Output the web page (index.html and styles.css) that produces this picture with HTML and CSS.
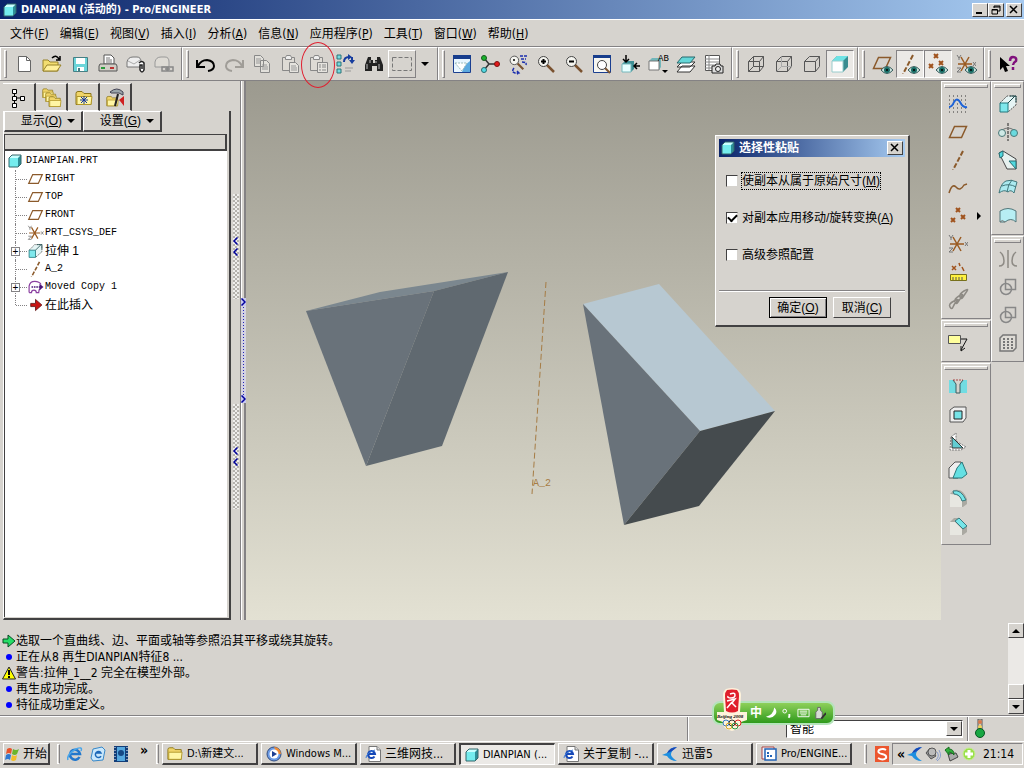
FILE: index.html
```html
<!DOCTYPE html>
<html lang="zh-CN">

<head>
    <meta charset="UTF-8">
    <meta name="viewport" content="width=device-width, initial-scale=1.0">
    <title>DIANPIAN (活动的) - Pro/ENGINEER</title>
    <link rel="stylesheet" href="styles.css">
</head>

<body>
    <!-- Shared icons -->
    <svg class="sprite" aria-hidden="true">
        <symbol id="part" viewBox="0 0 14 14">
            <path d="M1 4l3-3h9v9l-3 3H1z" fill="#2e8f98" />
            <path d="M1 4l3-3h9l-3 3z" fill="#c9ffff" />
            <path d="M1 4h9v9H1z" fill="#74ecee" />
            <path d="M1 4l3-3h9v9l-3 3H1z" fill="none" stroke="#33666b" />
        </symbol>
        <symbol id="plane" viewBox="0 0 20 20">
            <path d="M6.500 4.500H18.500L13.500 15.500H1.500z" fill="none" stroke="#8b5a2b" stroke-width="1.500" />
        </symbol>
        <symbol id="axis" viewBox="0 0 20 20">
            <path d="M15 1L5 20" stroke="#8b5a2b" stroke-width="2" stroke-dasharray="5 2" />
        </symbol>
        <symbol id="points" viewBox="0 0 20 20">
            <path d="M8 2l4 4m0-4l-4 4M13 9l4 4m0-4l-4 4M3 12l4 4m0-4l-4 4" stroke="#a0521d" stroke-width="2" />
        </symbol>
        <symbol id="csys" viewBox="0 0 20 20">
            <path d="M2 10h14M5 3l8 14M13 3L5 17" stroke="#9a5a20" stroke-width="1.500" />
            <path d="M1 1l2 3 2-3M3 4v2M17 8l3 4m0-4l-3 4M1 14h4l-4 4h4" fill="none" stroke="#777" />
        </symbol>
        <symbol id="eye" viewBox="0 0 12 8">
            <path d="M0 4q6-7 12 0q-6 7-12 0z" fill="#cfe4e0" stroke="#355b5b" />
            <circle cx="6" cy="4" r="3" fill="#176b64" />
            <circle cx="6" cy="4" r="1" />
        </symbol>
        <symbol id="extrude" viewBox="0 0 20 20">
            <path d="M2 9l7-7h9v9l-8 7" fill="#e6f5f5" stroke="#555" stroke-dasharray="2 1" />
            <path d="M2 9h8v9H2z" fill="#7fe8ec" stroke="#22777d" />
            <path d="M10 9l7-7M12 2h6v6" fill="none" stroke="#224f50" />
        </symbol>
        <symbol id="folder" viewBox="0 0 18 16">
            <path d="M1 3q0-2 2-2h4l2 2h7v11H1z" fill="#f0d468" stroke="#8a7418" />
            <path d="M2 6h15l-1 8H2z" fill="#fff6a4" stroke="#b09628" />
        </symbol>
        <symbol id="ie" viewBox="0 0 16 16">
            <path d="M12.500 11a5 5 0 1 1 .5-3H4" fill="none" stroke="#2277cc" stroke-width="2.500" />
            <path d="M1 14Q-1 9 9 3q7-3 5 2" fill="none" stroke="#4aa5e8" stroke-width="1.500" />
        </symbol>
        <symbol id="iepage" viewBox="0 0 16 16">
            <path d="M4 .5h8l3.500 3.500v11.500H4z" fill="#fff" stroke="#777" />
            <path d="M12 .5v3.500h3.500" fill="#ddd" stroke="#777" />
            <path d="M9.500 10.500a3.500 3.500 0 1 1 .5-2.500H3" fill="none" stroke="#1648b8" stroke-width="2" />
            <path d="M1 12Q1 7 10 4" fill="none" stroke="#3b7cd8" />
        </symbol>
        <symbol id="bird" viewBox="0 0 16 16">
            <path d="M15 1Q8 1 5 7L0 9l5 1q3 5 10 5q-5-3-6-6q0-5 6-8z" fill="#1d8fe0" />
            <path d="M15 1Q8 1 5 7q5-1 10-6z" fill="#1a49b8" />
        </symbol>
        <symbol id="box" viewBox="0 0 20 20">
            <path d="M2.500 7.500h11v10h-11zM2.500 7.500l5-5h10l-4 5M17.500 2.500v10l-4 5" fill="none" stroke="#555" />
        </symbol>
        <symbol id="clipboard" viewBox="0 0 20 20">
            <path d="M2.500 3.500h12v13h-12z" fill="#dedbd5" stroke="#888" />
            <path d="M5.500 3.500l1-2h4l1 2v2h-6z" fill="#eee" stroke="#888" />
        </symbol>
        <symbol id="union" viewBox="0 0 20 20">
            <path d="M7.500 2.500h10v10h-10z" fill="none" stroke="#888" stroke-width="1.500" />
            <circle cx="8" cy="12" r="5.500" fill="none" stroke="#888" stroke-width="1.500" />
        </symbol>
        <symbol id="magnifier" viewBox="0 0 20 20">
            <path d="M11 11l7 7" stroke="#7a5230" stroke-width="2.500" />
            <circle cx="7.500" cy="7.500" r="5" fill="#f5f5f0" stroke="#444" />
        </symbol>
        <symbol id="chevron" viewBox="0 0 5 8">
            <path d="M4.500 .5L1 4l3.500 3.500" fill="none" stroke="#00009c" stroke-width="1.500" />
        </symbol>
    </svg>

    <header class="titlebar">
        <svg class="icon-sm"><use href="#part" /></svg>
        <h1>DIANPIAN (活动的) - Pro/ENGINEER</h1>
        <div class="window-buttons">
            <button class="win-btn" aria-label="最小化"><svg viewBox="0 0 10 10"><path d="M1 8h6" stroke="#000" stroke-width="2" /></svg></button>
            <button class="win-btn" aria-label="还原"><svg viewBox="0 0 10 10"><path d="M3 1h6v5H7M3 3V1M3 2h6M1 4.500h5.500V9H1zM1 5h5" fill="none" stroke="#000" /></svg></button>
            <button class="win-btn win-close" aria-label="关闭"><svg viewBox="0 0 10 10"><path d="M1 1l7 7M8 1L1 8" stroke="#000" stroke-width="1.500" /></svg></button>
        </div>
    </header>

    <nav class="menubar">
        <button>文件(<u>F</u>)</button>
        <button>编辑(<u>E</u>)</button>
        <button>视图(<u>V</u>)</button>
        <button>插入(<u>I</u>)</button>
        <button>分析(<u>A</u>)</button>
        <button>信息(<u>N</u>)</button>
        <button>应用程序(<u>P</u>)</button>
        <button>工具(<u>T</u>)</button>
        <button>窗口(<u>W</u>)</button>
        <button>帮助(<u>H</u>)</button>
    </nav>

    <div class="toolbar">
        <div class="tool-group">
            <button class="tool" aria-label="新建"><svg viewBox="0 0 20 20"><path d="M4.500 2.500h8l4 4v11h-12z" fill="#fff" stroke="#666" /><path d="M12.500 2.500v4h4" fill="none" stroke="#666" /></svg></button>
            <button class="tool" aria-label="打开"><svg viewBox="0 0 20 20"><path d="M1 6h5l2 2h8v9H1z" fill="#f2dd70" stroke="#98832a" /><path d="M1 17l4-6h14l-4 6z" fill="#fff09a" stroke="#98832a" /><path d="M10 4q4-4 7 1m-3 1h4V2" fill="none" stroke="#000" stroke-width="1.500" /></svg></button>
            <button class="tool" aria-label="保存"><svg viewBox="0 0 20 20"><path d="M3.500 3.500h14v14h-14z" fill="#6bd5d9" stroke="#467f84" /><path d="M6 4h9v6H6zM7 13h7v4H7z" fill="#fff" /><path d="M8 14h2v3H8z" fill="#467f84" /></svg></button>
            <button class="tool" aria-label="打印"><svg viewBox="0 0 20 20"><path d="M6 10V1h7l3 3v6z" fill="#fff" stroke="#555" /><path d="M8 4h4M8 6h6M8 8h6" stroke="#777" /><path d="M2 10h16l1 2v5H1v-5z" fill="#d0cec6" stroke="#555" /><path d="M3 14h4" stroke="#2a9a3c" stroke-width="2" /><path d="M12 14h4" stroke="#b33" stroke-width="2" /></svg></button>
            <button class="tool" aria-label="附加发送"><svg viewBox="0 0 20 20"><path d="M1 8q1-5 6-5h4q4 0 4 5v5H1z" fill="#eee" stroke="#777" /><path d="M2 7l6 3 6-4" fill="none" stroke="#aaa" /><path d="M13 9q3-3 5 0v7q-2 4-4 0v-5h2v4" fill="#fff" stroke="#222" stroke-width="1.500" /></svg></button>
            <button class="tool" aria-label="链接发送"><svg viewBox="0 0 20 20"><path d="M1 8q1-5 6-5h4q4 0 4 5v5H1z" fill="#dedbd5" stroke="#999" /><path d="M8 13h5v4H8zM14 13h5v4h-5zM11 15h5" fill="none" stroke="#888" stroke-width="1.500" /></svg></button>
        </div>
        <div class="tool-group">
            <button class="tool" aria-label="撤消"><svg viewBox="0 0 20 20"><path d="M1 6v7h8M2 12q3-6 9-6 7 1 7 6 0 4-6 5" fill="none" stroke="#000" stroke-width="2" /></svg></button>
            <button class="tool" aria-label="重做"><svg viewBox="0 0 20 20"><path d="M19 6v7h-8M18 12q-3-6-9-6-7 1-7 6 0 4 6 5" fill="none" stroke="#a09d98" stroke-width="2" /></svg></button>
            <button class="tool" aria-label="复制"><svg viewBox="0 0 20 20"><path d="M2.500 1.500h6l3 3v8h-9zM8.500 6.500h6l3 3v9h-9z" fill="#e2e0db" stroke="#888" /><path d="M4 5h5M4 7h4M4 9h4M10 11h5M10 13h6M10 15h6" stroke="#999" /></svg></button>
            <button class="tool" aria-label="粘贴"><svg viewBox="0 0 20 20"><use href="#clipboard" /><path d="M9.500 8.500h6l3 3v7h-9z" fill="#e6e4df" stroke="#888" /><path d="M11 12h5M11 14h6M11 16h6" stroke="#999" /></svg></button>
            <button class="tool tool-marked" aria-label="选择性粘贴"><svg viewBox="0 0 20 20"><use href="#clipboard" /><path d="M9.500 8.500h10v10h-10z" fill="#e6e4df" stroke="#888" /><path d="M11 11h2M14 11h4M11 13h2M14 13h4M11 16h2M14 16h4" stroke="#888" /></svg></button>
            <button class="tool" aria-label="再生"><svg viewBox="0 0 20 20"><path d="M1 1h4v4H1zM1 8h4v4H1zM1 15h4v4H1z" fill="#76d9df" stroke="#2d7478" /><path d="M8 8q0-5 5-5" fill="none" stroke="#173d9e" stroke-width="2" /><path d="M12 0l4 3-4 3zM16 10l3-4h-6z" fill="#173d9e" /><path d="M16 3v4" stroke="#173d9e" stroke-width="2" /><path d="M9 14h8M9 17h6" stroke="#999" /></svg></button>
            <button class="tool" aria-label="查找"><svg viewBox="0 0 20 20"><path d="M4 3h3v3h2v3h2V6h2V3h3l3 8v6h-6v-5H8v5H1v-6z" fill="#222" /><path d="M3 10v5M6 6v3M15 10v5M12 7v2" stroke="#bbb" /></svg></button>
            <button class="tool raised" aria-label="选取框"><svg viewBox="0 0 20 20"><path d="M.5 3.500h19v13H.5z" fill="none" stroke="#777" stroke-dasharray="4 2" /></svg></button>
            <button class="tool tool-arrow" aria-label="选取选项"><svg viewBox="0 0 8 6"><path d="M0 1h8L4 5z" /></svg></button>
        </div>
        <div class="tool-group">
            <button class="tool" aria-label="重画"><svg viewBox="0 0 20 20"><path d="M1.500 1.500h17v17h-17z" fill="#e8f6ff" stroke="#1b3f90" /><path d="M1 1h18v4H1z" fill="#173d8c" /><path d="M10 18q2-7 8-11v11z" fill="#5ba9df" /><path d="M3 9l7 8 5-8z" fill="#fff" stroke="#9bb" stroke-dasharray="2 1" /></svg></button>
            <button class="tool" aria-label="旋转中心"><svg viewBox="0 0 20 20"><path d="M4 4l5 6-5 6M9 10h8" fill="none" stroke="#333" stroke-width="1.500" /><circle cx="4" cy="4" r="2.500" fill="#19b32c" stroke="#15591d" /><circle cx="4" cy="16" r="2.500" fill="#55dbe5" stroke="#286c70" /><circle cx="17" cy="10" r="2.500" fill="#e31919" stroke="#791414" /></svg></button>
            <button class="tool" aria-label="定向模式"><svg viewBox="0 0 20 20"><use href="#magnifier" width="17" height="17" /><circle cx="6" cy="6" r="1" /><path d="M12 2h7M13 5h5M14 8q5 0 4 3M6 14q-3 4 1 5h4m-2-2l2 2-2 1" fill="none" stroke="#1b2fae" stroke-width="1.500" stroke-dasharray="3 1" /></svg></button>
            <button class="tool" aria-label="放大"><svg viewBox="0 0 20 20"><use href="#magnifier" /><path d="M5 7.500h5M7.500 5v5" stroke="#000" stroke-width="2" /></svg></button>
            <button class="tool" aria-label="缩小"><svg viewBox="0 0 20 20"><use href="#magnifier" /><path d="M5 7.500h5" stroke="#000" stroke-width="2" /></svg></button>
            <button class="tool" aria-label="重新调整"><svg viewBox="0 0 20 20"><path d="M1.500 1.500h17v17h-17z" fill="#f6f6f1" stroke="#1b3f90" /><path d="M1 1h18v3H1z" fill="#173d8c" /><path d="M13 14l5 5" stroke="#7a5230" stroke-width="2" /><circle cx="10" cy="11" r="4.500" fill="#fff" stroke="#444" /></svg></button>
            <button class="tool" aria-label="重定向"><svg viewBox="0 0 20 20"><path d="M2 10l3-3h9v8l-3 3H2z" fill="#3e8f94" /><path d="M2 10h9v8H2z" fill="#e8ffff" stroke="#77b8bc" /><path d="M6 1v7m-3-3l3 3 3-3M20 12h-6m3-3l-3 3 3 3" fill="none" stroke="#000" stroke-width="1.500" /></svg></button>
            <button class="tool" aria-label="已命名的视图列表"><svg viewBox="0 0 20 20"><path d="M1 7l3-3h9v9l-2 3H1z" fill="#72b6ba" /><path d="M1 7h10v9H1z" fill="#fff" stroke="#777" /><text x="10" y="7" class="icon-text">AB</text><path d="M14 16h6l-3 3z" /></svg></button>
            <button class="tool" aria-label="层"><svg viewBox="0 0 20 20"><path d="M6 12h13l-5 6H1zM6 8h13l-5 5H1z" fill="#fff" stroke="#333" /><path d="M6 3h13l-5 6H1z" fill="#64d7d8" stroke="#28686c" /></svg></button>
            <button class="tool" aria-label="视图管理器"><svg viewBox="0 0 20 20"><path d="M1.500 1.500h14v15h-14z" fill="#fff" stroke="#555" /><path d="M1 5h14M1 8h14M1 11h14M1 14h14M5 1v15" stroke="#888" /><path d="M8 12h3l1-2h4l1 2h2v7H8z" fill="#ddd" stroke="#222" /><circle cx="14" cy="15" r="2.500" fill="#eee" stroke="#222" /></svg></button>
        </div>
        <div class="tool-group">
            <button class="tool" aria-label="线框"><svg viewBox="0 0 20 20"><use href="#box" /><path d="M7.500 2.500v10h10M7.500 12.500l-5 5" fill="none" stroke="#555" /></svg></button>
            <button class="tool" aria-label="隐藏线"><svg viewBox="0 0 20 20"><use href="#box" /><path d="M7.500 2.500v10h10M7.500 12.500l-5 5" fill="none" stroke="#aaa" /></svg></button>
            <button class="tool" aria-label="消隐"><svg><use href="#box" /></svg></button>
            <button class="tool pressed" aria-label="着色"><svg viewBox="0 0 20 20"><path d="M2 7l5-5h11v11l-5 5H2z" fill="#3a8c90" /><path d="M2 7l5-5h11l-5 5z" fill="#6fe3e5" /><path d="M2 7h11v11H2z" fill="#fff" stroke="#9cc" /></svg></button>
        </div>
        <div class="tool-group">
            <button class="tool" aria-label="平面显示"><svg viewBox="0 0 20 20"><use href="#plane" y="-1" width="20" height="20" /><use href="#eye" x="9" y="12" width="12" height="8" /></svg></button>
            <button class="tool pressed" aria-label="轴显示"><svg viewBox="0 0 20 20"><use href="#axis" x="-2" width="20" height="20" /><use href="#eye" x="8" y="12" width="12" height="8" /></svg></button>
            <button class="tool pressed" aria-label="点显示"><svg viewBox="0 0 20 20"><use href="#points" x="-2" y="-2" width="20" height="20" /><use href="#eye" x="8" y="12" width="12" height="8" /></svg></button>
            <button class="tool" aria-label="坐标系显示"><svg viewBox="0 0 20 20"><use href="#csys" width="20" height="20" /><use href="#eye" x="9" y="12" width="12" height="8" /></svg></button>
        </div>
        <div class="tool-group">
            <button class="tool" aria-label="上下文帮助"><svg viewBox="0 0 20 20"><path d="M2 3v13l3-3 2 5 3-1-2-5h4z" /><path d="M12 7q0-4 3-4 4 0 3 4-3 2-3 4M15 13v3" fill="none" stroke="#80107c" stroke-width="2.500" /></svg></button>
        </div>
    </div>

    <main class="workspace">
        <!-- Model tree -->
        <aside class="navigator">
            <div class="nav-tabs">
                <button class="nav-tab active" aria-label="模型树"><svg viewBox="0 0 20 20"><path d="M4.500 1v18M4 10h9" stroke="#000" /><path d="M2.500 1.500h4v4h-4zM2.500 8.500h4v4h-4zM2.500 15.500h4v4h-4zM10.500 8.500h4v4h-4z" fill="#fff" stroke="#000" /></svg></button>
                <button class="nav-tab" aria-label="文件夹浏览器"><svg viewBox="0 0 20 20"><use href="#folder" width="12" height="11" /><use href="#folder" x="3" y="4" width="12" height="11" /><use href="#folder" x="6" y="8" width="14" height="12" /></svg></button>
                <button class="nav-tab" aria-label="收藏夹"><svg viewBox="0 0 20 20"><use href="#folder" x="1" y="2" width="18" height="17" /><path d="M10 8v8M6 12h8M7 9l6 6M13 9l-6 6" stroke="#14359e" /></svg></button>
                <button class="nav-tab" aria-label="连接"><svg viewBox="0 0 20 20"><use href="#folder" y="7" width="13" height="13" /><path d="M4 4q7-6 13 0v3l-4-2H5z" fill="#9aa5aa" stroke="#445" /><path d="M12 6l-3 12" stroke="#222" stroke-width="2" /><path d="M13 12l5-4v10l-4-5z" fill="#cf2020" /></svg></button>
            </div>
            <div class="nav-body">
                <div class="nav-menus">
                    <button>显示(<u>O</u>) <span class="down"></span></button>
                    <button>设置(<u>G</u>) <span class="down"></span></button>
                </div>
                <div class="tree-panel">
                    <div class="tree-header"></div>
                    <div class="tree-root"><svg class="icon-sm"><use href="#part" /></svg>DIANPIAN.PRT</div>
                    <ul class="tree">
                        <li><svg class="icon-tree"><use href="#plane" /></svg>RIGHT</li>
                        <li><svg class="icon-tree"><use href="#plane" /></svg>TOP</li>
                        <li><svg class="icon-tree"><use href="#plane" /></svg>FRONT</li>
                        <li><svg class="icon-tree"><use href="#csys" /></svg>PRT_CSYS_DEF</li>
                        <li class="expandable cjk"><svg class="icon-tree"><use href="#extrude" /></svg>拉伸 1</li>
                        <li><svg class="icon-tree"><use href="#axis" /></svg>A_2</li>
                        <li class="expandable"><svg class="icon-tree" viewBox="0 0 20 20"><path d="M2 17V9q1-6 7-6 6 0 8 4M2 17h3q0-3 3-3t3 3h3q0-4 2-5" fill="none" stroke="#8a3fa0" stroke-width="1.500" /><path d="M5 10h11" stroke="#4b1479" stroke-width="2" stroke-dasharray="2 1" /><path d="M15 6l5 4-5 4z" fill="#4b1479" /></svg>Moved Copy 1</li>
                        <li class="cjk"><svg class="icon-tree" viewBox="0 0 20 20"><path d="M4 8h6V3l8 7-8 7v-5H4z" fill="#c81414" stroke="#5b1010" /></svg>在此插入</li>
                    </ul>
                </div>
            </div>
        </aside>
        <div class="sash">
            <div class="sash-handle"><svg><use href="#chevron" /></svg><svg><use href="#chevron" /></svg></div>
            <div class="sash-handle"><svg><use href="#chevron" /></svg><svg><use href="#chevron" /></svg></div>
        </div>
        <div class="splitter">
            <div class="splitter-handle"><svg><use href="#chevron" /></svg><svg><use href="#chevron" /></svg></div>
        </div>

        <section class="viewport">
            <svg class="model" viewBox="0 0 695 539" preserveAspectRatio="none">
                <path d="M60 230L134 211 262 191 188 210z" fill="#7b878f" />
                <path d="M60 230L188 210 120 385z" fill="#69727a" />
                <path d="M188 210L262 191 196 365 120 385z" fill="#606970" />
                <path d="M337 223L413 203 529 330 454 350z" fill="#b7c8d2" />
                <path d="M337 223L454 350 378 444z" fill="#69727a" />
                <path d="M454 350L529 330 453 425 378 444z" fill="#454b4e" />
                <path d="M300 201L286 413" stroke="#a67c45" stroke-dasharray="6 3" />
                <text x="287" y="405">A_2</text>
            </svg>

            <form class="dialog">
                <div class="dialog-title">
                    <svg class="icon-sm"><use href="#part" /></svg>
                    <h2>选择性粘贴</h2>
                    <button type="button" class="win-btn" aria-label="关闭对话框"><svg viewBox="0 0 10 10"><path d="M1 1l7 7M8 1L1 8" stroke="#000" stroke-width="1.500" /></svg></button>
                </div>
                <div class="dialog-body">
                    <label><input type="checkbox"><span class="focused">使副本从属于原始尺寸(<u>M</u>)</span></label>
                    <label><input type="checkbox" checked><span>对副本应用移动/旋转变换(<u>A</u>)</span></label>
                    <label><input type="checkbox"><span>高级参照配置</span></label>
                </div>
                <div class="dialog-actions">
                    <button type="button" class="default">确定(<u>O</u>)</button>
                    <button type="button">取消(<u>C</u>)</button>
                </div>
            </form>
        </section>

        <!-- Feature toolbars -->
        <div class="side-column side-wide">
            <div class="side-group">
                <button class="tool" aria-label="草绘"><svg viewBox="0 0 20 20"><path d="M1 2h18M1 6h18M1 10h18M1 14h18M1 18h18" stroke="#333" stroke-dasharray="1 3" /><path d="M1 13q3 0 5-5 3-5 6 0 3 6 7 5" fill="none" stroke="#1d63d8" stroke-width="2" /></svg></button>
                <button class="tool" aria-label="平面"><svg><use href="#plane" /></svg></button>
                <button class="tool" aria-label="轴"><svg><use href="#axis" /></svg></button>
                <button class="tool" aria-label="曲线"><svg viewBox="0 0 20 20"><path d="M1 15q3-10 7-6 4 5 8-2l3-1" fill="none" stroke="#8b5a2b" stroke-width="1.500" /></svg></button>
                <button class="tool" aria-label="点"><svg><use href="#points" /></svg><span class="flyout"></span></button>
                <button class="tool" aria-label="坐标系"><svg><use href="#csys" /></svg></button>
                <button class="tool" aria-label="分析"><svg viewBox="0 0 20 20"><path d="M4 4l4 4m0-4L4 8M11 1l1 3M14 5l2 4" stroke="#a0521d" stroke-width="1.500" /><path d="M2.500 12.500h16v6h-16z" fill="#fff23f" stroke="#77701c" /><path d="M5 18v-3M8 18v-3M11 18v-3M14 18v-3" stroke="#555" /></svg></button>
                <button class="tool" aria-label="参照"><svg viewBox="0 0 20 20"><path d="M2 17q-2-3 4-6t3 0-4 6-3 0zM7 12q-1-3 4-6t3 0-4 6-3 0zM12 7q-1-3 4-6t3 0-4 6-3 0z" fill="none" stroke="#8d8a84" stroke-width="1.500" /></svg></button>
            </div>
            <div class="side-group">
                <button class="tool" aria-label="注释"><svg viewBox="0 0 20 20"><path d="M.5 2.500h12v8H.5z" fill="#ffff9c" stroke="#555" /><path d="M13 6h6l-6 11m0-4v5l4-3" fill="none" stroke="#111" /></svg></button>
            </div>
            <div class="side-group">
                <button class="tool" aria-label="孔"><svg viewBox="0 0 20 20"><path d="M1 4h4l3 4v9H1zM19 4h-4l-3 4v9h7z" fill="#72dce2" /><path d="M5 4l3 4v9h4V8l3-4" fill="none" stroke="#375d60" /><path d="M5 4h10" stroke="#a44" stroke-dasharray="2 1" /></svg></button>
                <button class="tool" aria-label="壳"><svg viewBox="0 0 20 20"><path d="M2 6l4-3h12v11l-3 4H2z" fill="#eee" stroke="#555" /><path d="M6 7h8v8H6z" fill="#76e3e7" stroke="#222" /></svg></button>
                <button class="tool" aria-label="筋"><svg viewBox="0 0 20 20"><path d="M3 5l5-4v8l10 6-5 3H2z" fill="#fff" stroke="#777" stroke-dasharray="2 1" /><path d="M4 5v11h11z" fill="#62cdd2" stroke="#333" /></svg></button>
                <button class="tool" aria-label="拔模"><svg viewBox="0 0 20 20"><path d="M1 8l6-6h6v5l-3 11H1z" fill="#eee" stroke="#555" /><path d="M9 8l5-6 5 12-5 4H5z" fill="#65e0e3" stroke="#28777a" /></svg></button>
                <button class="tool" aria-label="倒圆角"><svg viewBox="0 0 20 20"><path d="M2 6l4-4q9-2 13 9v5l-4 3H2z" fill="#aaa9a2" /><path d="M2 6q10 0 12 7v6H2z" fill="#e7e7e1" /><path d="M5 3q8-2 13 9l-4 1Q12 6 6 6z" fill="#75e5e8" stroke="#397b80" /></svg></button>
                <button class="tool" aria-label="倒角"><svg viewBox="0 0 20 20"><path d="M2 6l4-4h5l8 8v6l-4 3H2z" fill="#aaa9a2" /><path d="M2 6h5l7 7v6H2z" fill="#e7e7e1" /><path d="M7 5l4-3 8 8-4 3z" fill="#75e5e8" stroke="#397b80" /></svg></button>
            </div>
        </div>
        <div class="side-column side-narrow">
            <div class="side-group">
                <button class="tool" aria-label="拉伸"><svg><use href="#extrude" /></svg></button>
                <button class="tool" aria-label="旋转"><svg viewBox="0 0 20 20"><path d="M10 1v18" stroke="#222" stroke-dasharray="3 1" /><path d="M4 8q6-4 12 0" fill="none" stroke="#777" /><circle cx="4" cy="11" r="3.500" fill="#cfe9e6" stroke="#4b7777" /><circle cx="16" cy="11" r="3.500" fill="#6adade" stroke="#4b7777" /></svg></button>
                <button class="tool" aria-label="可变剖面扫描"><svg viewBox="0 0 20 20"><path d="M1 3l4-2 13 8v10h-9z" fill="#e7f1ef" stroke="#444" /><path d="M1 3l4-2v5L2 8zM11 11h7v8z" fill="#51d9df" stroke="#286c70" /></svg></button>
                <button class="tool" aria-label="边界混合"><svg viewBox="0 0 20 20"><path d="M1 15q2-10 7-12 5-2 11 1l-3 11q-3-4-6-1-4-3-9 1z" fill="#abeaf0" stroke="#42777b" /><path d="M4 8q7-3 14 1M9 14q1-8 5-12" fill="none" stroke="#42777b" /></svg></button>
                <button class="tool" aria-label="造型"><svg viewBox="0 0 20 20"><path d="M2 5q8-5 16 0v11q-5-5-11 0H2z" fill="#b7eef3" stroke="#52777a" /><path d="M7 16q-3-3-5 0" fill="none" stroke="#777" /></svg></button>
            </div>
            <div class="side-group">
                <button class="tool" aria-label="镜像"><svg viewBox="0 0 20 20"><path d="M10 1v18M2 3q4 3 4 9 0 5-5 5M18 3q-4 3-4 9 0 5 5 5" fill="none" stroke="#8d8a84" stroke-width="1.500" /></svg></button>
                <button class="tool" aria-label="合并"><svg><use href="#union" /></svg></button>
                <button class="tool" aria-label="修剪"><svg><use href="#union" /></svg></button>
                <button class="tool" aria-label="阵列"><svg viewBox="0 0 20 20"><path d="M2 5l3-3h13v13l-3 3H2z" fill="#dedbd5" stroke="#777" stroke-width="1.500" /><path d="M5 6h11M5 9h11M5 12h11M5 15h11" stroke="#777" stroke-width="2" stroke-dasharray="2 2" /></svg></button>
            </div>
        </div>
    </main>

    <section class="messages">
        <ul>
            <li><svg viewBox="0 0 14 14"><path d="M1 5h5V1l7 6-7 6V9H1z" fill="#26dd67" stroke="#064c22" /></svg>选取一个直曲线、边、平面或轴等参照沿其平移或绕其旋转。</li>
            <li><svg viewBox="0 0 14 14"><circle cx="7" cy="7" r="3" fill="#00f" /></svg>正在从8 再生DIANPIAN特征8 ...</li>
            <li><svg viewBox="0 0 14 14"><path d="M7 1l6.500 12H.5z" fill="#ff0" stroke="#222" /><path d="M7 4v5M7 10v2" stroke="#000" stroke-width="2" /></svg>警告:拉伸_1__2 完全在模型外部。</li>
            <li><svg viewBox="0 0 14 14"><circle cx="7" cy="7" r="3" fill="#00f" /></svg>再生成功完成。</li>
            <li><svg viewBox="0 0 14 14"><circle cx="7" cy="7" r="3" fill="#00f" /></svg>特征成功重定义。</li>
        </ul>
        <div class="scrollbar">
            <button aria-label="向上滚动"><span class="up"></span></button>
            <div class="scroll-thumb"></div>
            <button aria-label="向下滚动"><span class="down"></span></button>
        </div>
    </section>

    <footer class="statusbar">
        <div class="status-text"></div>
        <div class="status-filter">
            <!-- Input method bar -->
            <div class="ime">
                <svg class="ime-logo" viewBox="0 0 34 44">
                    <path d="M11 1q6-2 12 0 3 2 3 6l-1 17h7v8l-6 2q1 7-9 9-10-2-9-9l-6-2v-8h7L8 7q0-4 3-6z" fill="#fff3dc" />
                    <path d="M12 2q5-1 10 0 2 2 2 6l-1 15q-6 3-12 0L10 8q0-4 2-6z" fill="#e01f2c" />
                    <path d="M15 6q5-2 5 1 0 3-4 3t-3-2M12 13l8-2-3 4 4 4M17 14l-5 6" fill="none" stroke="#fff" stroke-width="1.500" />
                    <text x="2" y="30">Beijing 2008</text>
                    <g fill="none">
                        <circle cx="11" cy="35" r="3" stroke="#3979c7" /><circle cx="17" cy="35" r="3" stroke="#333" /><circle cx="23" cy="35" r="3" stroke="#d22" /><circle cx="14" cy="38" r="3" stroke="#dba624" /><circle cx="20" cy="38" r="3" stroke="#27964a" />
                    </g>
                </svg>
                <span>中</span>
                <svg viewBox="0 0 14 14"><path d="M10 1q4 4 1 8-4 5-10 2 8-2 9-10z" fill="#fff" /></svg>
                <svg viewBox="0 0 14 14"><circle cx="4" cy="5" r="2" fill="none" stroke="#fff" /><path d="M9 8v3l-1 1" fill="none" stroke="#fff" stroke-width="2" /></svg>
                <svg viewBox="0 0 14 14"><path d="M1 3h12v8H1zM3 5h8M3 7h8M4 9h6" fill="none" stroke="#fff" /></svg>
                <svg viewBox="0 0 14 14"><path d="M5 1h3v3l2 2v7H3V6l2-2z" fill="#d6dbd5" stroke="#666" /><path d="M9 13l5-6" stroke="#333" stroke-width="2" /></svg>
            </div>
            <select aria-label="选择过滤器"><option>智能</option></select>
            <span class="select-arrow"><span class="down"></span></span>
        </div>
        <div class="status-light"><svg viewBox="0 0 12 20"><path d="M4 0h4v12H4z" fill="#c9c5bb" stroke="#555" /><circle cx="6" cy="3" r="2" fill="#d9784b" /><circle cx="6" cy="8" r="2" fill="#f0d15c" /><circle cx="6" cy="14" r="4.500" fill="#19a743" stroke="#075721" /></svg></div>
    </footer>

    <nav class="taskbar">
        <button class="start"><svg class="icon-task" viewBox="0 0 16 16"><path d="M2 3q3-2 5 0L6 8Q4 6 1 8z" fill="#e8532b" /><path d="M8 3q3 2 6 0l-2 5q-2 2-5 0z" fill="#6bb52c" /><path d="M1 9q3-2 5 0l-1 5q-2-2-5 0z" fill="#2e78cf" /><path d="M7 9q3 2 5 0l-1 5q-3 2-5 0z" fill="#f2be2a" /></svg>开始</button>
        <span class="task-sep"></span>
        <div class="quick-launch">
            <a href="#" aria-label="Internet Explorer"><svg class="icon-task"><use href="#ie" /></svg></a>
            <a href="#" aria-label="Outlook Express"><svg class="icon-task" viewBox="0 0 16 16"><path d="M3 3l9-2 3 3-2 10-10 1-2-3z" fill="#c9e7fb" stroke="#3888c8" /><path d="M11 10a3 3 0 1 1 0-3H6" fill="none" stroke="#1c68b8" stroke-width="1.500" /></svg></a>
            <a href="#" aria-label="影音播放"><svg class="icon-task" viewBox="0 0 16 16"><path d="M1 0h14v16H1z" fill="#123d78" /><path d="M4 1h8v14H4z" fill="#55a8df" /><path d="M2 1v15M14 1v15" stroke="#fff" stroke-dasharray="1 2" /><circle cx="8" cy="7" r="3" fill="#164884" /></svg></a>
            <span class="more">»</span>
        </div>
        <span class="task-sep"></span>
        <div class="tasks">
            <button><svg class="icon-task"><use href="#folder" /></svg><span>D:\新建文...</span></button>
            <button><svg class="icon-task" viewBox="0 0 16 16"><circle cx="8" cy="8" r="7" fill="#6c9be5" stroke="#334e80" /><path d="M8 1a7 7 0 0 1 7 7h-4z" fill="#ef8b32" /><circle cx="8" cy="8" r="4.500" fill="#fff" /><path d="M6 5l5 3-5 3z" fill="#1d3f92" /></svg><span>Windows M...</span></button>
            <button class="cjk"><svg class="icon-task"><use href="#iepage" /></svg><span>三维网技...</span></button>
            <button class="current"><svg class="icon-sm"><use href="#part" /></svg><span>DIANPIAN (...</span></button>
            <button class="cjk"><svg class="icon-task"><use href="#iepage" /></svg><span>关于复制 -...</span></button>
            <button class="cjk"><svg class="icon-task"><use href="#bird" /></svg><span>迅雷5</span></button>
            <button><svg class="icon-task" viewBox="0 0 16 16"><path d="M1 1h12v12H1z" fill="#eef2fa" stroke="#a44" /><path d="M4 3h11v11H4z" fill="#fff" stroke="#2263b5" stroke-width="1.500" /><path d="M7 6v5M9 10h3" stroke="#2263b5" stroke-width="2" stroke-dasharray="2 1" /></svg><span>Pro/ENGINE...</span></button>
        </div>
        <span class="task-sep"></span>
        <svg class="sogou" viewBox="0 0 14 16"><path d="M0 0h14v16H0z" fill="#ec562e" /><path d="M11 4Q8 2 4 4q-2 3 3 4t4 4q-3 3-8 0" fill="none" stroke="#fff" stroke-width="2" /></svg>
        <div class="tray">
            <span class="more">«</span>
            <svg class="icon-task"><use href="#bird" /></svg>
            <svg class="icon-task" viewBox="0 0 16 16"><path d="M1 7l4-5 6 8-5 3z" fill="#999" stroke="#555" /><circle cx="7" cy="6" r="4" fill="#bbb" stroke="#555" /><path d="M12 6q3 4-1 8M14 4q4 7-2 11" fill="none" stroke="#8aa0d0" /></svg>
            <svg class="icon-task" viewBox="0 0 16 16"><path d="M5 8l8-1 2 4-8 4z" fill="#aaa" stroke="#444" /><path d="M2 4l4-3v2q5 0 5 6-2-3-5-3v3z" fill="#31ae3b" stroke="#176e20" /></svg>
            <svg class="icon-task" viewBox="0 0 16 16"><circle cx="8" cy="8" r="6" fill="#9be04a" stroke="#c3ec92" /><path d="M8 4v8M4 8h8" stroke="#fff" stroke-width="3" /></svg>
            <time>21:14</time>
        </div>
    </nav>
</body>

</html>
```

FILE: styles.css
```css
:root {
    --face: #d6d3ce;
    --shadow: #848284;
    --dark: #424142;
    --navy: #0a246a;
    --ui-font: "DejaVu Sans Condensed", "Noto Sans CJK SC", sans-serif;
    --song-font: "Liberation Sans", "Noto Sans CJK SC", sans-serif;
}

*,
*::before,
*::after {
    margin: 0;
    padding: 0;
    box-sizing: border-box;
}

body {
    min-height: 100vh;
    display: flex;
    flex-direction: column;
    background: var(--face);
    color: #000;
    font: 12px/16px var(--ui-font);
    overflow: hidden;
}

button {
    font: inherit;
    color: inherit;
    background: var(--face);
    border: none;
    white-space: nowrap;
}

ul {
    list-style: none;
}

svg {
    flex: none;
    display: block;
}

.sprite {
    position: absolute;
    width: 0;
    height: 0;
}

.icon-sm {
    width: 14px;
    height: 14px;
}

.icon-task {
    width: 16px;
    height: 16px;
}

.icon-text {
    font: 9px "Liberation Mono", monospace;
}

/* Small triangles */
.down,
.up,
.flyout {
    display: inline-block;
    border: 4px solid transparent;
}

.down {
    border-top-color: #000;
    border-bottom: 0;
}

.up {
    border-bottom-color: #000;
    border-top: 0;
}

/* Title bar */
.titlebar {
    display: flex;
    align-items: center;
    gap: 4px;
    height: 20px;
    padding: 0 2px 0 3px;
    background: linear-gradient(to right, var(--navy), #a6caf0);
    border-bottom: 1px solid #fff;
    color: #fff;
}

.titlebar h1 {
    flex: 1;
    font-size: 11px;
    font-weight: bold;
}

.window-buttons {
    display: flex;
}

.win-btn {
    width: 16px;
    height: 14px;
    padding: 1px 2px;
    border: 1px solid #fff;
    border-right-color: var(--dark);
    border-bottom-color: var(--dark);
}

.win-btn svg {
    width: 10px;
    height: 10px;
}

.win-close {
    margin-left: 2px;
}

/* Menu bar */
.menubar {
    display: flex;
    height: 26px;
    padding: 2px 0 0 5px;
}

.menubar button {
    padding: 0 6px 0 5px;
}

/* Toolbars */
.toolbar {
    display: flex;
    height: 35px;
    border-top: 1px solid var(--shadow);
    border-bottom: 1px solid var(--shadow);
}

.tool-group {
    display: flex;
    align-items: center;
    padding-right: 3px;
    border-top: 1px solid #fff;
    border-left: 1px solid #fff;
    border-right: 1px solid var(--shadow);
}

.tool-group:last-child {
    flex: 1;
    border-right: none;
}

.tool-group::before {
    content: "";
    width: 3px;
    height: 28px;
    margin: 0 3px;
    border: 1px solid #fff;
    border-right-color: var(--shadow);
    border-bottom-color: var(--shadow);
}

.tool {
    position: relative;
    display: flex;
    align-items: center;
    justify-content: center;
    width: 28px;
    height: 28px;
}

.tool svg {
    width: 20px;
    height: 20px;
    overflow: visible;
}

.tool-arrow {
    width: 18px;
}

.tool-arrow svg {
    width: 8px;
    height: 6px;
}

.raised {
    border: 1px solid #fff;
    border-right-color: var(--shadow);
    border-bottom-color: var(--shadow);
}

.pressed {
    background: #ebe9e6;
    border: 1px solid var(--shadow);
    border-right-color: #fff;
    border-bottom-color: #fff;
}

.tool-marked::after {
    content: "";
    position: absolute;
    inset: -8px -3px -10px;
    border: 1px solid #e02030;
    border-radius: 50%;
    z-index: 2;
}

/* Workspace */
.workspace {
    flex: 1;
    display: flex;
    min-height: 0;
}

.navigator {
    width: 231px;
    display: flex;
    flex-direction: column;
    padding: 2px 0 0 3px;
}

.nav-tabs {
    display: flex;
}

.nav-tab {
    width: 32px;
    height: 28px;
    padding: 4px 6px;
    border-top: 1px solid #fff;
    border-right: 2px solid var(--dark);
    border-bottom: 1px solid #fff;
}

.nav-tab.active {
    width: 33px;
    padding-left: 7px;
    border-bottom-color: var(--face);
}

.nav-tab svg {
    width: 20px;
    height: 20px;
}

.nav-body {
    flex: 1;
    display: flex;
    flex-direction: column;
    border-left: 1px solid #fff;
    border-right: 2px solid var(--dark);
    border-bottom: 2px solid var(--dark);
}

.nav-menus {
    display: flex;
    font-family: var(--song-font);
}

.nav-menus button {
    width: 79px;
    height: 21px;
    padding-left: 10px;
    border-top: 1px solid #fff;
    border-left: 1px solid #fff;
    border-right: 2px solid var(--dark);
    border-bottom: 2px solid var(--dark);
}

.nav-menus .down {
    margin: 0 0 2px 2px;
}

.tree-panel {
    flex: 1;
    margin: 2px 2px 1px 0;
    background: #fff;
    border-left: 1px solid var(--dark);
    font: 10px/18px "Liberation Mono", monospace;
}

.tree-header {
    height: 17px;
    margin-bottom: 1px;
    background: var(--face);
    border: 1px solid var(--dark);
    border-width: 1px 2px 2px 0;
}

.tree-root {
    display: flex;
    align-items: center;
    gap: 4px;
    height: 18px;
    padding-left: 3px;
}

.tree {
    padding-left: 10px;
}

.tree li {
    position: relative;
    display: flex;
    align-items: center;
    gap: 1px;
    height: 18px;
    padding-left: 11px;
    border-left: 1px dotted var(--shadow);
}

.tree li::before {
    content: "";
    position: absolute;
    left: 0;
    top: 9px;
    width: 11px;
    border-top: 1px dotted var(--shadow);
}

.tree li:last-child {
    border-left-color: transparent;
}

.tree li:last-child::after {
    content: "";
    position: absolute;
    left: -1px;
    top: 0;
    height: 9px;
    border-left: 1px dotted var(--shadow);
}

.tree .expandable::after {
    content: "+";
    position: absolute;
    left: -5px;
    top: 5px;
    width: 9px;
    height: 9px;
    background: #fff;
    border: 1px solid var(--shadow);
    font: 10px/7px "Liberation Sans", sans-serif;
    text-align: center;
}

.tree .cjk {
    font: 12px/18px var(--song-font);
}

.icon-tree {
    width: 17px;
    height: 16px;
}

.sash {
    width: 9px;
    display: flex;
    flex-direction: column;
    align-items: center;
    justify-content: space-between;
    padding: 113px 1px 111px;
}

.sash-handle {
    width: 6px;
    height: 105px;
    display: flex;
    flex-direction: column;
    align-items: center;
    justify-content: center;
    gap: 3px;
    background: repeating-conic-gradient(#b5b2ad 0 25%, #efeeec 0 50%) 0 0 / 4px 4px;
}

.sash svg,
.splitter svg {
    width: 5px;
    height: 8px;
}

.splitter {
    width: 6px;
    display: flex;
    align-items: center;
    border: solid var(--shadow);
    border-width: 0 1px;
    background: linear-gradient(to right, #fff 1px, var(--face) 1px 3px, var(--shadow) 3px);
}

.splitter-handle {
    width: 5px;
    height: 105px;
    display: flex;
    flex-direction: column;
    justify-content: space-between;
    background: linear-gradient(#2222b8 1px, transparent 1px) 50% 0 / 1px 3px repeat-y #d4d3e0;
}

.splitter svg {
    background: #c8c8f0;
    transform: scaleX(-1);
}

/* Graphics window */
.viewport {
    position: relative;
    flex: 1;
    min-width: 0;
    background: linear-gradient(#9c9a8f, #e3e1d3);
}

.model {
    width: 100%;
    height: 100%;
}

.model text {
    fill: #a67c45;
    font: 10px "Liberation Mono", monospace;
}

/* Paste special dialog */
.dialog {
    position: absolute;
    top: 54px;
    right: 31px;
    width: 195px;
    padding: 3px;
    background: var(--face);
    border: 1px solid #fff;
    border-right: 2px solid var(--dark);
    border-bottom: 2px solid var(--dark);
    font-family: var(--song-font);
}

.dialog-title {
    display: flex;
    align-items: center;
    gap: 4px;
    height: 18px;
    padding: 0 2px;
    background: linear-gradient(to right, var(--navy), #a6caf0);
    color: #fff;
}

.dialog-title h2 {
    flex: 1;
    font-size: 12px;
    font-weight: bold;
}

.dialog-body {
    display: flex;
    flex-direction: column;
    gap: 19px;
    padding: 15px 7px 26px;
}

.dialog-body label {
    display: flex;
    align-items: center;
    gap: 4px;
    height: 18px;
    white-space: nowrap;
}

.dialog-body input {
    appearance: none;
    width: 12px;
    height: 12px;
    background: #fff;
    border: 1px solid var(--dark);
    border-right-color: var(--face);
    border-bottom-color: var(--face);
    display: flex;
    align-items: center;
    justify-content: center;
}

.dialog-body input:checked::after {
    content: "";
    width: 9px;
    height: 6px;
    border-left: 2px solid #000;
    border-bottom: 2px solid #000;
    transform: rotate(-45deg);
    margin-bottom: 2px;
}

.focused {
    outline: 1px dotted #000;
}

.dialog-actions {
    display: flex;
    justify-content: flex-end;
    gap: 6px;
    padding: 6px 14px 4px;
    border-top: 1px solid var(--shadow);
    box-shadow: inset 0 1px #fff;
}

.dialog-actions button {
    width: 58px;
    height: 21px;
    border: 1px solid #fff;
    border-right-color: var(--dark);
    border-bottom-color: var(--dark);
}

.dialog-actions .default {
    border: 1px solid #000;
    box-shadow: inset 1px 1px #fff, inset -1px -1px var(--shadow);
}

/* Feature toolbars */
.side-wide {
    width: 50px;
}

.side-narrow {
    width: 33px;
}

.side-group {
    padding: 0 0 4px 2px;
    margin-bottom: 1px;
    border: 1px solid #fff;
    border-right-color: var(--shadow);
    border-bottom-color: var(--shadow);
}

.side-group::before {
    content: "";
    display: block;
    height: 4px;
    margin: 2px 2px 2px 0;
    border: 1px solid #fff;
    border-right-color: var(--shadow);
    border-bottom-color: var(--shadow);
}

.flyout {
    position: absolute;
    right: -9px;
    border-left-color: #000;
    border-right: 0;
}

/* Message log */
.messages {
    display: flex;
    height: 96px;
    border-bottom: 1px solid var(--shadow);
}

.messages ul {
    flex: 1;
    padding: 13px 0 0 2px;
}

.messages li {
    display: flex;
    align-items: center;
    height: 16px;
}

.messages li svg {
    width: 14px;
    height: 14px;
}

.scrollbar {
    width: 16px;
    display: flex;
    flex-direction: column;
    margin: 3px 0 1px;
    background: #ebe9e6;
}

.scrollbar button,
.scroll-thumb,
.select-arrow {
    display: flex;
    align-items: center;
    justify-content: center;
    height: 15px;
    background: var(--face);
    border: 1px solid #fff;
    border-right-color: var(--dark);
    border-bottom-color: var(--dark);
}

.scroll-thumb {
    margin-top: auto;
}

/* Status bar */
.statusbar {
    display: flex;
    height: 25px;
    border-top: 1px solid #fff;
}

.status-text {
    flex: 1;
    border-right: 1px solid var(--shadow);
}

.status-filter {
    position: relative;
    display: flex;
    align-items: center;
    width: 280px;
    padding: 0 4px 0 97px;
    border-left: 1px solid #fff;
    border-right: 1px solid var(--shadow);
}

.status-filter select {
    appearance: none;
    flex: 1;
    height: 18px;
    padding: 1px 3px;
    border: 1px solid var(--dark);
    border-right-color: #fff;
    border-bottom-color: #fff;
    border-radius: 0;
    background: #fff;
    color: #000;
    font: 12px/14px var(--ui-font);
}

.select-arrow {
    position: absolute;
    right: 5px;
    top: 4px;
    width: 16px;
    pointer-events: none;
}

.status-light {
    width: 56px;
    padding: 2px 0 0 5px;
    border-left: 1px solid #fff;
}

.status-light svg {
    width: 12px;
    height: 20px;
}

/* Input method bar */
.ime {
    position: absolute;
    left: 23px;
    top: -16px;
    z-index: 1;
    display: flex;
    align-items: center;
    gap: 3px;
    width: 123px;
    height: 24px;
    padding-left: 36px;
    border: 2px solid #b5e3bb;
    border-radius: 8px;
    background: linear-gradient(#8ed05a, #2f9a1c);
    color: #fff;
    font-weight: bold;
}

.ime svg {
    width: 13px;
    height: 14px;
}

.ime .ime-logo {
    position: absolute;
    left: 1px;
    top: -15px;
    width: 34px;
    height: 44px;
}

.ime-logo text {
    font: italic bold 5px "Liberation Serif", serif;
}

/* Taskbar */
.taskbar {
    display: flex;
    align-items: center;
    height: 27px;
    padding: 1px 1px 3px 3px;
    border-top: 1px solid #fff;
}

.taskbar button {
    display: flex;
    align-items: center;
    gap: 4px;
    height: 22px;
    border: 1px solid #fff;
    border-right: 2px solid var(--dark);
    border-bottom: 2px solid var(--dark);
}

.taskbar .start {
    gap: 2px;
    width: 47px;
    padding-left: 1px;
}

.task-sep {
    width: 3px;
    height: 20px;
    margin: 0 3px 0 7px;
    border: 1px solid #fff;
    border-right-color: var(--shadow);
}

.quick-launch {
    display: flex;
    align-items: center;
    gap: 7px;
    padding-left: 4px;
    width: 86px;
}

.more {
    font: bold 14px/14px var(--ui-font);
}

.quick-launch .more {
    margin: -8px 0 0 4px;
}

.tasks {
    flex: 1;
    display: flex;
    gap: 3px;
    min-width: 0;
}

.tasks button {
    flex: 0 1 96px;
    min-width: 0;
    padding-left: 4px;
    overflow: hidden;
    font-size: 11px;
}

.tasks .cjk {
    font-size: 12px;
}

.tasks .current {
    background: #ebe9e6;
    border: 1px solid #fff;
    border-top: 2px solid var(--dark);
    border-left: 2px solid var(--dark);
}

.sogou {
    width: 14px;
    height: 16px;
    margin: 0 3px 0 5px;
}

.tray {
    display: flex;
    align-items: center;
    gap: 2px;
    width: 131px;
    height: 22px;
    padding: 0 8px 0 4px;
    border: 1px solid var(--shadow);
    border-right-color: #fff;
    border-bottom-color: #fff;
}

.tray time {
    margin-left: auto;
}
```
